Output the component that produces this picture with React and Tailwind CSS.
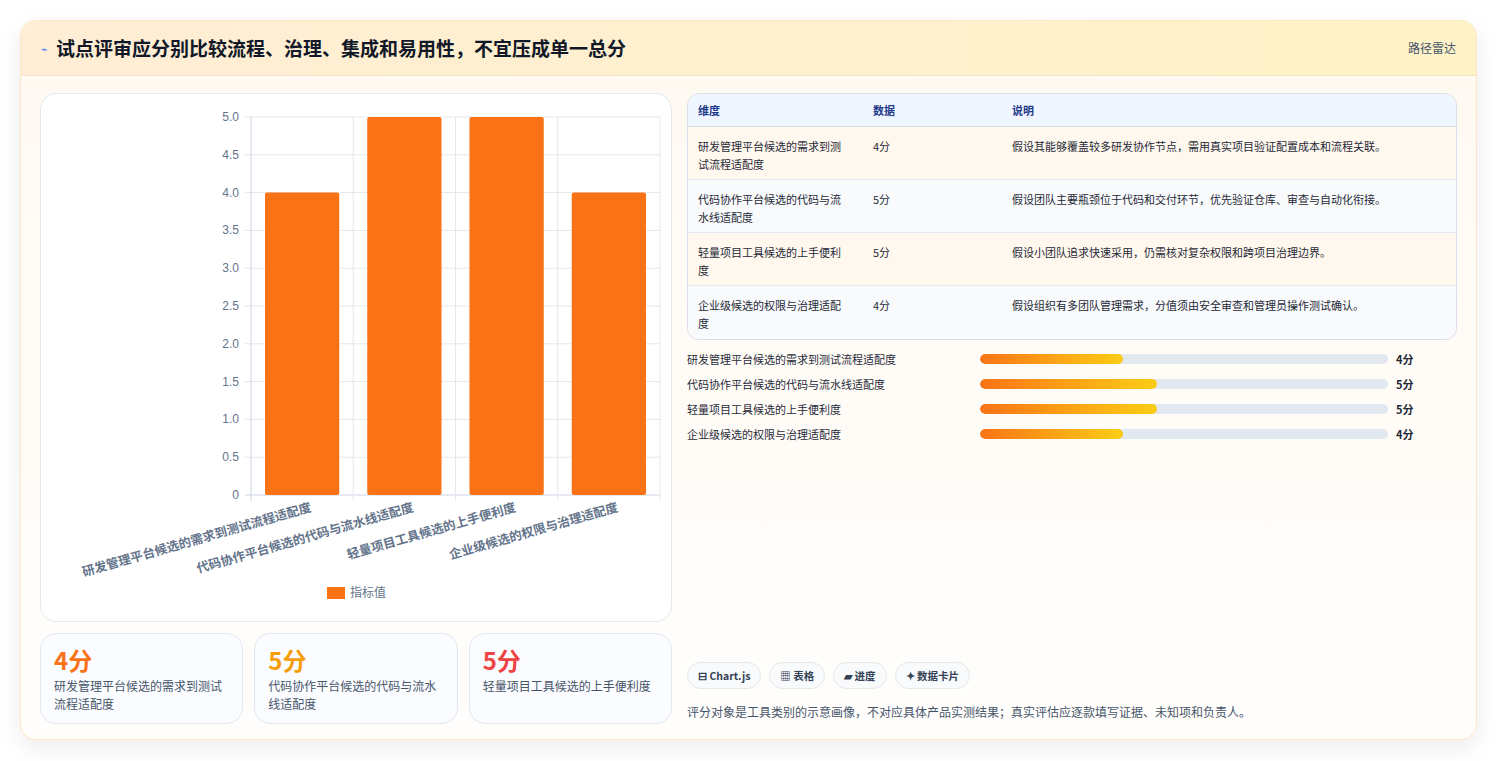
import React from "react";

const F = { fontFamily: '"Noto Sans CJK SC","Noto Sans",sans-serif' };
const cats = ["研发管理平台候选的需求到测试流程适配度", "代码协作平台候选的代码与流水线适配度", "轻量项目工具候选的上手便利度", "企业级候选的权限与治理适配度"];
const vals = [4, 5, 5, 4];
const notes = ["假设其能够覆盖较多研发协作节点，需用真实项目验证配置成本和流程关联。", "假设团队主要瓶颈位于代码和交付环节，优先验证仓库、审查与自动化衔接。", "假设小团队追求快速采用，仍需核对复杂权限和跨项目治理边界。", "假设组织有多团队管理需求，分值须由安全审查和管理员操作测试确认。"];
const tableCats = [["研发管理平台候选的需求到测", "试流程适配度"], ["代码协作平台候选的代码与流", "水线适配度"], ["轻量项目工具候选的上手便利", "度"], ["企业级候选的权限与治理适配", "度"]];

function Chart() {
  // svg coords relative to card (card at x40,y92)
  const x0 = 210, x1 = 619, yTop = 23, yBot = 401;
  const h = yBot - yTop;
  const bw = (x1 - x0) / 4;
  const ticks = [0, 0.5, 1, 1.5, 2, 2.5, 3, 3.5, 4, 4.5, 5];
  return (
    <svg width="630" height="527" className="block">
      {ticks.map((t) => {
        const y = yBot - (t / 5) * h;
        return (
          <g key={t}>
            <line x1={x0 - 6} x2={x1} y1={y} y2={y} stroke={t === 0 ? "#cbd5e1" : "#e5e7eb"} />
            <text x={x0 - 12} y={y + 4} textAnchor="end" fontSize="12" fill="#64748b" fontFamily="Liberation Sans, sans-serif">{t === 0 ? "0" : t.toFixed(1)}</text>
          </g>
        );
      })}
      {[0, 1, 2, 3, 4].map((i) => (
        <line key={i} x1={x0 + i * bw} x2={x0 + i * bw} y1={yTop} y2={yBot + 6} stroke={i === 0 ? "#cbd5e1" : "#e5e7eb"} />
      ))}
      {vals.map((v, i) => {
        const bh = (v / 5) * h;
        return <rect key={i} x={x0 + i * bw + 14} y={yBot - bh} width={bw - 28} height={bh} rx="2" fill="#f97316" />;
      })}
      {cats.map((c, i) => {
        const cx = x0 + i * bw + bw / 2;
        return (
          <text key={i} x={cx + 10} y={yBot + 16} textAnchor="end" fontSize="12.5" fontWeight="600" fill="#64748b" transform={`rotate(-16 ${cx + 10} ${yBot + 16})`} style={F}>{c}</text>
        );
      })}
      <rect x="286" y="493" width="18" height="12" fill="#f97316" />
      <text x="309" y="503" fontSize="12" fill="#64748b" style={F}>指标值</text>
    </svg>
  );
}

export default function App() {
  return (
    <div className="w-[1498px] h-[761px] bg-white pt-[20px] px-[20px]" style={F}>
      <div className="w-[1457px] h-[720px] rounded-2xl border border-[#fde6c2] shadow-[0_8px_24px_rgba(0,0,0,0.08)] overflow-hidden bg-gradient-to-b from-[#fff9f1] to-[#fffefc] flex flex-col">
        <div className="h-[55px] shrink-0 flex items-center justify-between px-5 bg-gradient-to-r from-[#ffedd5] to-[#fef3c7] border-b border-[#f4e3c6]">
          <div className="flex items-center gap-2">
            <span className="text-[11px] text-[#3b82f6]">⌁</span>
            <span className="text-[19px] font-bold text-[#111827]">试点评审应分别比较流程、治理、集成和易用性，不宜压成单一总分</span>
          </div>
          <span className="text-[12px] text-[#475569]">路径雷达</span>
        </div>
        <div className="flex gap-[15px] px-[19px] pt-[17px]">
          <div className="w-[632px] flex flex-col gap-[11px]">
            <div className="h-[529px] rounded-2xl border border-[#e2e8f0] bg-white overflow-hidden">
              <Chart />
            </div>
            <div className="grid grid-cols-3 gap-[11px]">
              {[["4分", "text-[#f97316]", "研发管理平台候选的需求到测试流程适配度"], ["5分", "text-[#f59e0b]", "代码协作平台候选的代码与流水线适配度"], ["5分", "text-[#ef4444]", "轻量项目工具候选的上手便利度"]].map(([v, c, t], i) => (
                <div key={i} className="h-[91px] rounded-2xl border border-[#e2e8f0] bg-[#fafcff] px-[13px] pt-[10px]">
                  <div className={`text-[24px] font-bold leading-[32px] ${c}`}>{v}</div>
                  <div className="text-[12px] leading-[18px] text-[#475569] mt-[1px]">{t}</div>
                </div>
              ))}
            </div>
          </div>
          <div className="flex-1 flex flex-col">
            <div className="rounded-xl border border-[#d7dee8] overflow-hidden">
              <div className="h-[33px] bg-[#eff6ff] border-b border-[#d7dee8] flex items-center text-[11px] font-semibold text-[#1e3a8a]">
                <div className="w-[185px] pl-[10px]">维度</div>
                <div className="w-[139px]">数据</div>
                <div>说明</div>
              </div>
              {tableCats.map((c, i) => (
                <div key={i} className={`h-[53px] flex text-[11px] text-[#1f2937] pt-[10px] ${i < 3 ? "border-b border-[#e5e9f0]" : ""} ${i % 2 === 0 ? "bg-[#fff8ee]" : "bg-[#f8fafc]"}`}>
                  <div className="w-[185px] pl-[10px] leading-[18px]">{c[0]}<br />{c[1]}</div>
                  <div className="w-[139px] leading-[18px]">{vals[i]}分</div>
                  <div className="leading-[18px]">{notes[i]}</div>
                </div>
              ))}
            </div>
            <div className="mt-[10px] flex flex-col gap-[7px]">
              {cats.map((c, i) => (
                <div key={i} className="h-[18px] flex items-center text-[11px]">
                  <div className="w-[293px] text-[#1f2937]">{c}</div>
                  <div className="w-[408px] h-[10px] rounded-full bg-[#e2e8f0] overflow-hidden">
                    <div className="h-full rounded-full bg-gradient-to-r from-[#f97316] to-[#facc15]" style={{ width: vals[i] === 5 ? "43.5%" : "35%" }} />
                  </div>
                  <div className="ml-[8px] font-bold text-[#1f2937]">{vals[i]}分</div>
                </div>
              ))}
            </div>
            <div className="mt-[219px] flex gap-[8px]">
              {["⊟ Chart.js", "▦ 表格", "▰ 进度", "✦ 数据卡片"].map((t, i) => (
                <span key={i} className="h-[27px] px-[10px] rounded-full border border-[#e5e7eb] bg-[#f8fafc] flex items-center text-[10.5px] font-semibold text-[#334155]">{t}</span>
              ))}
            </div>
            <div className="mt-[14px] text-[12px] text-[#475569]">评分对象是工具类别的示意画像，不对应具体产品实测结果；真实评估应逐款填写证据、未知项和负责人。</div>
          </div>
        </div>
      </div>
    </div>
  );
}
